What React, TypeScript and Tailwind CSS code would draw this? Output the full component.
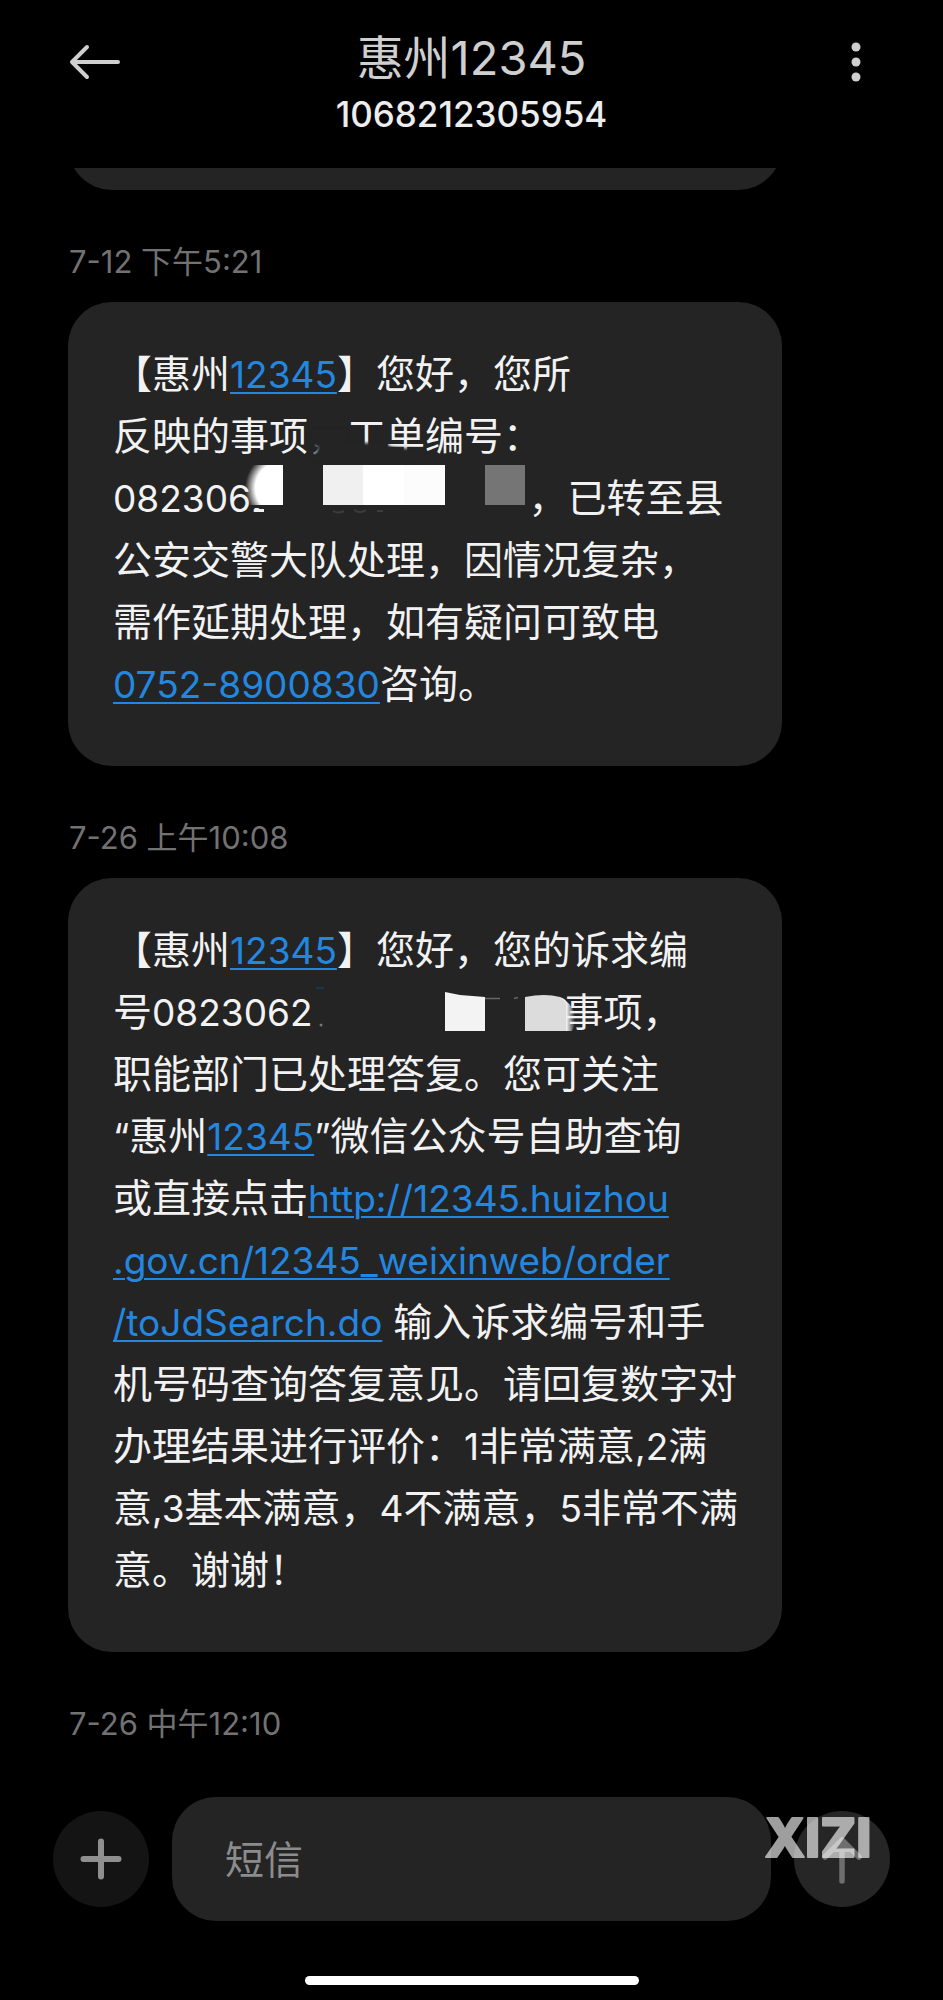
import React from 'react';

type Props = { children?: React.ReactNode };

function Bubble({ children }: Props) {
  return (
    <div className="relative mx-[68px] w-[714px] max-w-full rounded-[44px] bg-[#242424] px-[45px] pt-[41px] pb-[51px] text-[39px] leading-[62px] whitespace-nowrap text-[#f2f2f2]">
      {children}
    </div>
  );
}

function Stamp({ children }: Props) {
  return (
    <div className="px-[69px] pt-[50px] pb-[18px]">
      <time className="block text-[31px] leading-[44px] text-[#727272]">{children}</time>
    </div>
  );
}

// latin runs sit a little smaller than the chinese text
function Num({ children }: Props) {
  return <span className="text-[37px] leading-none">{children}</span>;
}

function Link({ href, children }: { href: string; children: React.ReactNode }) {
  return (
    <a href={href} className="text-[37px] leading-none text-[#2387e0] underline decoration-2 underline-offset-4">
      {children}
    </a>
  );
}

// mosaic and smudges over the ticket number, 1st message
function TicketMask() {
  return (
    <svg className="pointer-events-none absolute top-0 left-0" width="714" height="240" viewBox="68 302 714 240" aria-hidden="true">
      <defs>
        <radialGradient id="blob" gradientUnits="userSpaceOnUse" cx="282" cy="488" r="37">
          <stop offset="0.72" stopColor="#fff" />
          <stop offset="1" stopColor="#fff" stopOpacity="0" />
        </radialGradient>
        <filter id="soft" x="-10%" y="-50%" width="120%" height="200%" colorInterpolationFilters="sRGB">
          <feGaussianBlur stdDeviation="1.500" />
        </filter>
      </defs>
      <path d="M308 430H346V443H384L392 447L412 449L424 456V462H308V454L316 453L318 447L308 445Z" fill="#242424" filter="url(#soft)" />
      <rect x="252" y="470" width="34" height="38" fill="#242424" />
      <rect x="264" y="480" width="22" height="40" fill="#242424" />
      <rect x="244" y="465" width="39" height="40" fill="url(#blob)" />
      <rect x="323" y="465" width="40" height="40" fill="#f0f0f0" />
      <rect x="363" y="465" width="41" height="40" fill="#fff" />
      <rect x="404" y="465" width="41" height="40" fill="#fcfcfc" />
      <rect x="485" y="465" width="40" height="40" fill="#757575" />
      <path d="M333 511q5 3 11 0M354 510q6 4 12 0M377 511h6" stroke="#3c3c3c" strokeWidth="2" fill="none" />
    </svg>
  );
}

// same for the 2nd message
function OrderMask() {
  return (
    <svg className="pointer-events-none absolute top-0 left-0" width="714" height="180" viewBox="68 878 714 180" aria-hidden="true">
      <defs>
        <linearGradient id="edge" x1="0" x2="1">
          <stop offset="0.45" stopColor="#efefef" />
          <stop offset="1" stopColor="#efefef" stopOpacity="0" />
        </linearGradient>
      </defs>
      <path d="M445 992L460 995L485 997V1031H445Z" fill="#f3f3f3" />
      <path d="M485 998.500h15M514 998.500l4-1" stroke="#666" strokeWidth="1.500" />
      <path d="M525 997Q545 993 560 997Q566 999 567 1003V1031H525Z" fill="#dcdcdc" />
      <path d="M560 997Q576 1006 575 1020Q575 1026 572 1031H566V1003Z" fill="url(#edge)" />
      <path d="M316 988h8" stroke="#18384f" strokeWidth="2" />
      <circle cx="321" cy="1025" r="1.500" fill="#777" />
    </svg>
  );
}

export default function App() {
  return (
    <div className="flex min-h-screen flex-col bg-black font-[Inter,'Noto_Sans_CJK_SC',sans-serif]">
      <header className="flex h-[168px] items-start justify-between px-[68px] pt-[30px]">
        <button aria-label="返回" className="mt-[12px]">
          <svg width="52" height="40" viewBox="0 0 52 40" fill="none" stroke="#cfcfcf" strokeWidth="4" strokeLinecap="round" strokeLinejoin="round">
            <path d="M50 20H4M19 5L4 20l15 15" />
          </svg>
        </button>
        <div className="text-center">
          <h1 className="text-[47px] leading-[56px] text-[#cfcfcf]">惠州12345</h1>
          <p className="text-[35px] leading-[56px] font-medium text-[#ededed]">1068212305954</p>
        </div>
        <button aria-label="更多" className="mt-[12px]">
          <svg width="52" height="40" viewBox="0 0 52 40" fill="#cfcfcf">
            <circle cx="33" cy="5" r="4.500" />
            <circle cx="33" cy="20" r="4.500" />
            <circle cx="33" cy="35" r="4.500" />
          </svg>
        </button>
      </header>

      <main className="flex-1">
        {/* tail of the previous message */}
        <div className="flex h-[22px] items-end overflow-hidden">
          <div className="mx-[68px] h-[100px] w-[714px] shrink-0 rounded-[44px] bg-[#242424]" />
        </div>

        <Stamp>7-12 下午5:21</Stamp>
        <Bubble>
          <p>【惠州<Link href="tel:12345">12345</Link>】您好，您所</p>
          <p>反映的事项，工单编号：</p>
          <p>
            <Num>0823062</Num>
            <span className="inline-block w-[255px]" />，已转至县
          </p>
          <p>公安交警大队处理，因情况复杂，</p>
          <p>需作延期处理，如有疑问可致电</p>
          <p><Link href="tel:0752-8900830">0752-8900830</Link>咨询。</p>
          <TicketMask />
        </Bubble>

        <Stamp>7-26 上午10:08</Stamp>
        <Bubble>
          <p>【惠州<Link href="tel:12345">12345</Link>】您好，您的诉求编</p>
          <p>
            号<Num>0823062</Num>
            <span className="inline-block w-[252px]" />事项，
          </p>
          <p>职能部门已处理答复。您可关注</p>
          <p><Num>“</Num>惠州<Link href="tel:12345">12345</Link><Num>”</Num>微信公众号自助查询</p>
          <p>或直接点击<Link href="http://12345.huizhou.gov.cn/12345_weixinweb/order/toJdSearch.do">http://12345.huizhou<br />.gov.cn/12345_weixinweb/order<br />/toJdSearch.do</Link> 输入诉求编号和手</p>
          <p>机号码查询答复意见。请回复数字对</p>
          <p>办理结果进行评价：<Num>1</Num>非常满意<Num>,2</Num>满</p>
          <p>意<Num>,3</Num>基本满意，<Num>4</Num>不满意，<Num>5</Num>非常不满</p>
          <p>意。谢谢！</p>
          <OrderMask />
        </Bubble>

        <Stamp>7-26 中午12:10</Stamp>
      </main>

      <footer className="pb-[15px]">
        <div className="flex items-center gap-[23px] px-[53px]">
          <button aria-label="添加" className="flex size-[96px] shrink-0 items-center justify-center rounded-full bg-[#141414]">
            <svg width="42" height="42" viewBox="0 0 42 42" stroke="#8f8f8f" strokeWidth="6" strokeLinecap="round">
              <path d="M21 3.500v35M3.500 21h35" />
            </svg>
          </button>
          <input
            type="text"
            aria-label="短信"
            placeholder="短信"
            className="h-[124px] min-w-0 flex-1 rounded-[44px] bg-[#242424] px-[53px] text-[39px] text-[#f2f2f2] outline-none placeholder:text-[#8c8c8c]"
          />
          <div className="relative shrink-0">
            <button aria-label="发送" className="flex size-[96px] items-center justify-center rounded-full bg-[#262626]">
              <svg width="42" height="52" viewBox="0 0 42 52" fill="none" stroke="#6e6e6e" strokeWidth="5.500" strokeLinecap="round" strokeLinejoin="round">
                <path d="M21 6L34 19H8Z" fill="#6e6e6e" stroke="none" />
                <path d="M21 7v41M4 24L21 7l17 17" />
              </svg>
            </button>
            <svg className="pointer-events-none absolute -top-[14px] -left-[46px] overflow-visible" width="142" height="84" viewBox="0 0 142 84" aria-hidden="true">
              <g opacity="0.62">
                <text x="70" y="60" textAnchor="middle" fontFamily="Inter, sans-serif" fontWeight="800" fontSize="53" fill="#fff" stroke="#fff" strokeWidth="2" strokeLinejoin="round">XIZI</text>
              </g>
            </svg>
          </div>
        </div>
        <div className="mx-auto mt-[55px] h-[9px] w-[334px] rounded-full bg-white" />
      </footer>
    </div>
  );
}
